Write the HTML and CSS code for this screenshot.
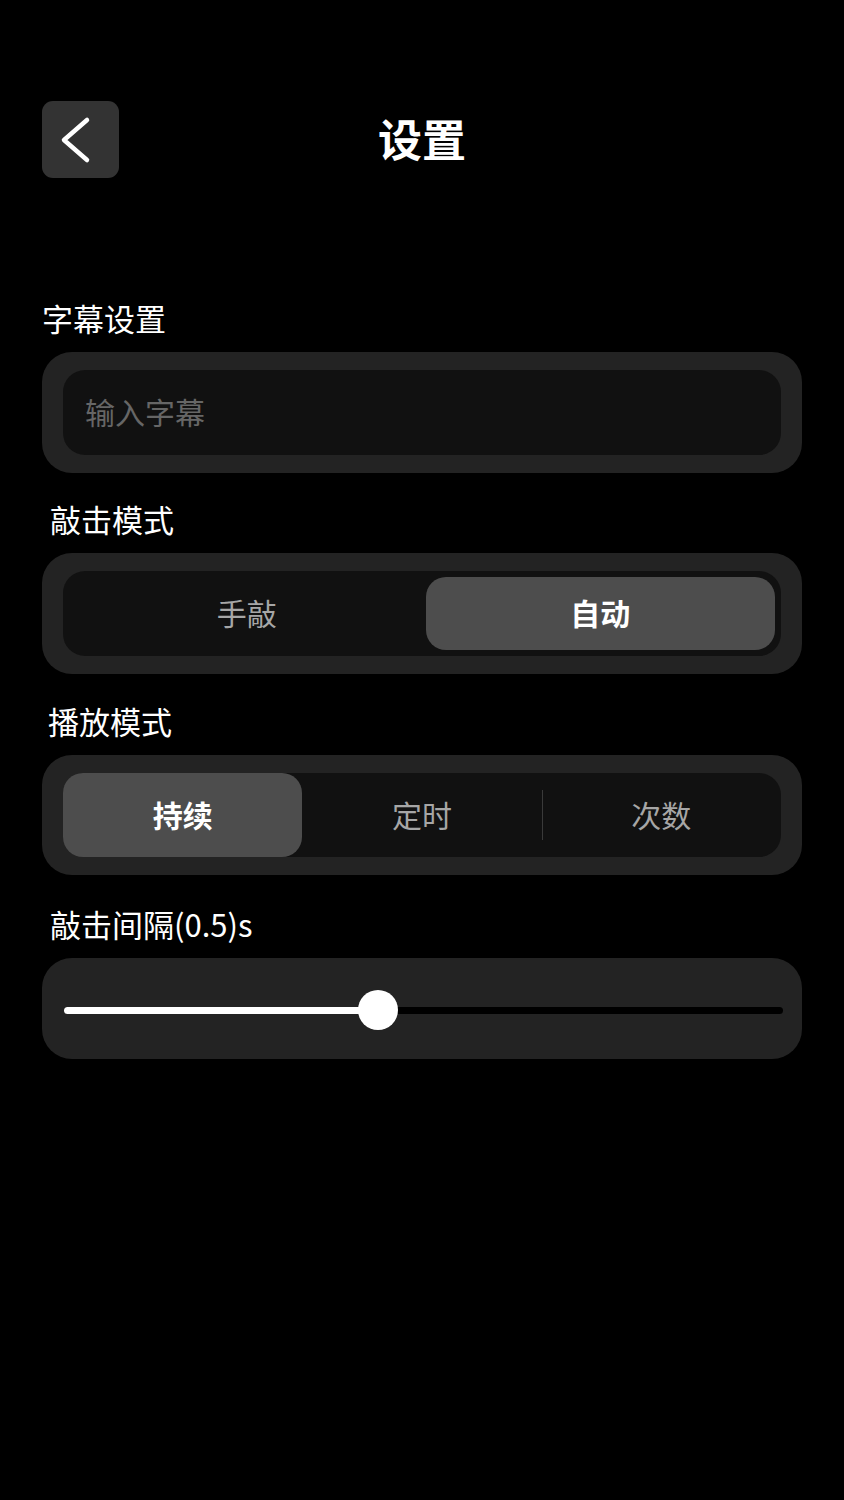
FILE: index.html
```html
<!DOCTYPE html>
<html lang="zh-CN">
<head>
  <meta charset="UTF-8">
  <meta name="viewport" content="width=device-width, initial-scale=1.0">
  <title>设置</title>
  <link rel="stylesheet" href="styles.css">
</head>
<body>

  <div class="page">
    <div class="header">
      <div class="back">
        <svg width="77" height="77" viewBox="0 0 77 77">
          <polyline points="45,19 22,39 45,59" fill="none" stroke="#fff" stroke-width="4.5" stroke-linecap="round" stroke-linejoin="round"/>
        </svg>
      </div>
      <h1 class="title">设置</h1>
    </div>

    <div class="label label-first">字幕设置</div>
    <div class="card">
      <div class="field">输入字幕</div>
    </div>

    <div class="label">敲击模式</div>
    <div class="card">
      <div class="seg seg-two">
        <div class="seg-item">手敲</div>
        <div class="seg-item active">自动</div>
      </div>
    </div>

    <div class="label label-play">播放模式</div>
    <div class="card">
      <div class="seg seg-three">
        <div class="seg-item active">持续</div>
        <div class="seg-item">定时</div>
        <div class="seg-item divided">次数</div>
      </div>
    </div>

    <div class="label label-last">敲击间隔(0.5)s</div>
    <div class="card card-slider">
      <div class="track">
        <div class="fill" style="width: 43.7%;"></div>
        <div class="thumb" style="left: 43.7%;"></div>
      </div>
    </div>
  </div>

</body>
</html>
```

FILE: styles.css
```css
body {
  margin: 0;
  background: #000;
  color: #fff;
  font-family: "Noto Sans CJK SC", "Noto Sans", sans-serif;
}

.page {
  padding: 101px 42px 0;
}

.header {
  display: grid;
  grid-template-columns: 77px 1fr 77px;
  align-items: center;
  height: 77px;
}

.back {
  width: 77px;
  height: 77px;
  background: #333;
  border-radius: 11px;
}

.back svg {
  display: block;
}

.title {
  margin: 0;
  text-align: center;
  font-size: 44px;
  font-weight: bold;
  line-height: 1;
  padding-bottom: 3px;
}

.label {
  font-size: 31px;
  line-height: 36px;
  padding-left: 8px;
  margin: 28px 0 16px;
}

.label-first {
  padding-left: 0;
  margin-top: 122px;
}

.label-play {
  padding-left: 6px;
  margin-top: 29px;
}

.label-last {
  margin-top: 31px;
}

.card {
  background: #232323;
  border-radius: 30px;
  padding: 18px 21px;
}

.field {
  background: #111;
  border-radius: 22px;
  height: 82px;
  padding: 0 0 3px 22px;
  display: flex;
  align-items: center;
  font-size: 30px;
  color: #666;
}

.seg {
  background: #111;
  border-radius: 22px;
  display: flex;
}

.seg-two {
  padding: 6px 6px 6px 9px;
  gap: 4px;
  height: 73px;
}

.seg-three {
  height: 84px;
}

.seg-item {
  flex: 1;
  display: flex;
  align-items: center;
  justify-content: center;
  padding-bottom: 3px;
  font-size: 30px;
  color: #a6a6a6;
  border-radius: 20px;
  position: relative;
}

.seg-item.active {
  background: #4d4d4d;
  color: #fff;
  font-weight: bold;
}

.divided::before {
  content: "";
  position: absolute;
  left: 0;
  top: 17px;
  bottom: 17px;
  width: 1px;
  background: #3a3a3a;
}

.card-slider {
  height: 101px;
  padding: 3px 19px 0 22px;
  box-sizing: border-box;
  display: flex;
  align-items: center;
}

.track {
  position: relative;
  flex: 1;
  height: 7px;
  background: #000;
  border-radius: 4px;
}

.fill {
  height: 100%;
  background: #fff;
  border-radius: 4px;
}

.thumb {
  position: absolute;
  top: 50%;
  width: 40px;
  height: 40px;
  margin: -20px 0 0 -20px;
  background: #fff;
  border-radius: 50%;
}
```
